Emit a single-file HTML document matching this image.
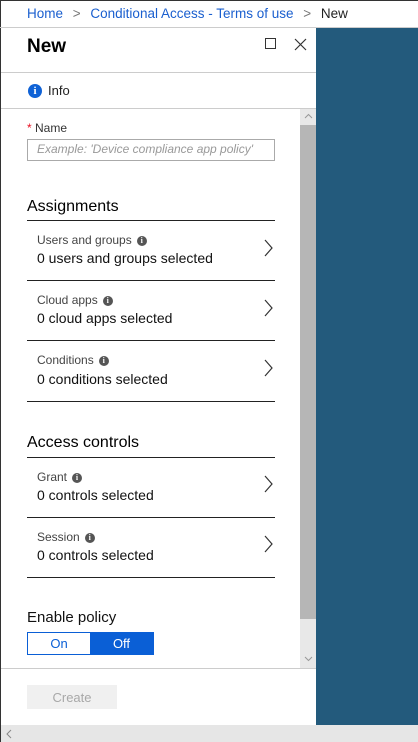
<!DOCTYPE html>
<html><head><style>
*{margin:0;padding:0;box-sizing:border-box}
body{width:418px;height:742px;overflow:hidden;background:#fff;font-family:"Segoe UI","Liberation Sans",sans-serif;position:relative;color:#000}
.a{position:absolute;white-space:nowrap}
.t{font-size:12px;color:#444}
.v{font-size:14px;color:#111}
.hr{position:absolute;left:27px;width:248px;height:1px;background:#222}
.chev{position:absolute;left:262px;width:12px;height:18px}
.i{display:inline-block;width:10px;height:10px;border-radius:50%;background:#555;color:#fff;font-size:8px;line-height:10px;text-align:center;font-weight:bold;margin-left:5px;vertical-align:1px;font-family:"Liberation Serif",serif}
</style></head><body>
<div class="a" style="left:0;top:0;width:418px;height:1px;background:#333"></div>
<div class="a" style="left:0;top:0;width:1px;height:742px;background:#333"></div>
<div class="a" style="left:0;top:27px;width:418px;height:1px;background:#ccc"></div>
<div class="a" style="left:27px;top:6px;font-size:13.5px;color:#1a5fcf">Home <span style="color:#777;margin:0 6px">&gt;</span> Conditional Access - Terms of use <span style="color:#777;margin:0 6px">&gt;</span> <span style="color:#222">New</span></div>
<div class="a" style="left:316px;top:28px;width:102px;height:697px;background:#235a7c"></div>
<div class="a" style="left:27px;top:36px;font-size:19px;font-weight:600">New</div>
<div class="a" style="left:265px;top:38px;width:11px;height:11px;border:1px solid #333"></div>
<svg class="a" style="left:294px;top:38px" width="13" height="13"><path d="M1 1L12 12M12 1L1 12" stroke="#333" stroke-width="1.2"/></svg>
<div class="a" style="left:1px;top:72px;width:315px;height:1px;background:#ccc"></div>
<div class="a" style="left:28px;top:84px;width:14px;height:14px;border-radius:50%;background:#0f62d6;color:#fff;font-size:11px;line-height:14px;text-align:center;font-weight:bold;font-family:'Liberation Serif',serif">i</div>
<div class="a" style="left:48px;top:83px;font-size:13px;color:#222">Info</div>
<div class="a" style="left:1px;top:108px;width:315px;height:1px;background:#ccc"></div>
<div class="a" style="left:300px;top:109px;width:16px;height:559px;background:#e8e8e8"></div>
<div class="a" style="left:300px;top:125px;width:16px;height:494px;background:#b6b6b6"></div>
<svg class="a" style="left:304px;top:113px" width="9" height="6"><path d="M1 5L4.5 1.5L8 5" fill="none" stroke="#999"/></svg>
<svg class="a" style="left:304px;top:656px" width="9" height="6"><path d="M1 1L4.5 4.5L8 1" fill="none" stroke="#999"/></svg>
<div class="a" style="left:27px;top:121px;font-size:12px;color:#333"><span style="color:#e81123">*</span> Name</div>
<div class="a" style="left:27px;top:139px;width:248px;height:22px;border:1px solid #aaa;font-size:12px;font-style:italic;color:#999;padding:2px 9px">Example: 'Device compliance app policy'</div>
<div class="a" style="left:27px;top:198px;font-size:16px">Assignments</div>
<div class="hr" style="top:220px"></div>
<div class="a t" style="left:37px;top:233px">Users and groups<span class="i">i</span></div>
<div class="a v" style="left:37px;top:250px">0 users and groups selected</div>
<div class="hr" style="top:280px"></div>
<div class="a t" style="left:37px;top:293px">Cloud apps<span class="i">i</span></div>
<div class="a v" style="left:37px;top:310px">0 cloud apps selected</div>
<div class="hr" style="top:340px"></div>
<div class="a t" style="left:37px;top:353px">Conditions<span class="i">i</span></div>
<div class="a v" style="left:37px;top:371px">0 conditions selected</div>
<div class="hr" style="top:401px"></div>
<div class="a" style="left:27px;top:434px;font-size:16px">Access controls</div>
<div class="hr" style="top:457px"></div>
<div class="a t" style="left:37px;top:470px">Grant<span class="i">i</span></div>
<div class="a v" style="left:37px;top:487px">0 controls selected</div>
<div class="hr" style="top:517px"></div>
<div class="a t" style="left:37px;top:530px">Session<span class="i">i</span></div>
<div class="a v" style="left:37px;top:547px">0 controls selected</div>
<div class="hr" style="top:577px"></div>
<svg class="chev" style="top:239px" viewBox="0 0 12 18"><path d="M3 1L10 9L3 17" fill="none" stroke="#333" stroke-width="1.2"/></svg>
<svg class="chev" style="top:299px" viewBox="0 0 12 18"><path d="M3 1L10 9L3 17" fill="none" stroke="#333" stroke-width="1.2"/></svg>
<svg class="chev" style="top:359px" viewBox="0 0 12 18"><path d="M3 1L10 9L3 17" fill="none" stroke="#333" stroke-width="1.2"/></svg>
<svg class="chev" style="top:475px" viewBox="0 0 12 18"><path d="M3 1L10 9L3 17" fill="none" stroke="#333" stroke-width="1.2"/></svg>
<svg class="chev" style="top:535px" viewBox="0 0 12 18"><path d="M3 1L10 9L3 17" fill="none" stroke="#333" stroke-width="1.2"/></svg>
<div class="a" style="left:27px;top:609px;font-size:15px;color:#111">Enable policy</div>
<div class="a" style="left:27px;top:632px;width:127px;height:23px;border:1px solid #0a5fd6;display:flex;font-size:13px">
<div style="width:62px;text-align:center;line-height:22px;color:#0a5fd6">On</div>
<div style="flex:1;background:#0a5fd6;color:#fff;text-align:center;line-height:22px">Off</div></div>
<div class="a" style="left:1px;top:668px;width:315px;height:1px;background:#ccc"></div>
<div class="a" style="left:27px;top:685px;width:90px;height:24px;background:#f0f0f0;color:#a8a8a8;font-size:13px;text-align:center;line-height:25px">Create</div>
<div class="a" style="left:1px;top:725px;width:417px;height:17px;background:#e6e6e6"></div>
<svg class="a" style="left:6px;top:729px" width="6" height="10"><path d="M5 1L1 5L5 9" fill="none" stroke="#888"/></svg>
</body></html>
